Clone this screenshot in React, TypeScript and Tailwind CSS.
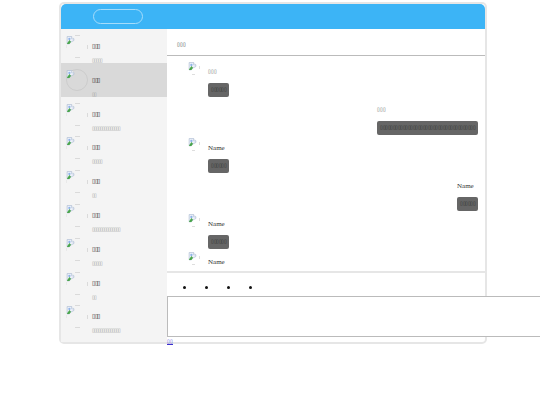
const rows = [
  { name: "▯▯▯", last: "▯▯▯▯▯" },
  { name: "▯▯▯", last: "▯▯", active: true },
  { name: "▯▯▯", last: "▯▯▯▯▯▯▯▯▯▯▯▯▯▯" },
  { name: "▯▯▯", last: "▯▯▯▯▯" },
  { name: "▯▯▯", last: "▯▯" },
  { name: "▯▯▯", last: "▯▯▯▯▯▯▯▯▯▯▯▯▯▯" },
  { name: "▯▯▯", last: "▯▯▯▯▯" },
  { name: "▯▯▯", last: "▯▯" },
  { name: "▯▯▯", last: "▯▯▯▯▯▯▯▯▯▯▯▯▯▯" },
];

const messages = [
  { name: "▯▯▯", text: "▯▯▯▯▯▯", tofu: true },
  { name: "▯▯▯", text: "▯▯▯▯▯▯▯▯▯▯▯▯▯▯▯▯▯▯▯▯▯▯▯▯▯▯▯▯▯▯▯▯▯▯▯▯▯▯", tofu: true, mine: true },
  { name: "Name", text: "▯▯▯▯▯▯" },
  { name: "Name", text: "▯▯▯▯▯▯", mine: true },
  { name: "Name", text: "▯▯▯▯▯▯" },
  // scrolled: only the header of this one is in view
  { name: "Name", text: "" },
];

// the browser's broken image glyph
function BrokenImage({ className }: { className: string }) {
  return (
    <svg viewBox="0 0 16 16" className={className}>
      <path d="M2 1h8l4 4v3L8 11l-2 3H2z" fill="#eef2fa" stroke="#9fb0cc" strokeWidth="1" />
      <path d="M2 13l4-6 3 3-3 4H2z" fill="#4aa54c" />
      <path d="M6 3a2 2 0 1 0 .1 0z" fill="#8fb2e8" />
      <path d="M10 1v4h4" fill="#fff" stroke="#9fb0cc" strokeWidth="1" />
    </svg>
  );
}

function ListAvatar({ active }: { active?: boolean }) {
  return (
    <div className="relative h-[22px] w-[22px] shrink-0">
      <svg viewBox="0 0 22 22" className="absolute inset-0 h-full w-full overflow-visible">
        {active ? (
          <circle cx="11" cy="11" r="10.500" fill="none" stroke="#c6c6c6" strokeWidth="0.7" />
        ) : (
          <g fill="none" stroke="#cfcfcf" strokeWidth="0.7">
            <path d="M9 0.500h5" />
            <path d="M9 22.500h5" />
            <path d="M21.500 10v4" />
            <path d="M0.500 10v3" stroke="#e4e4e4" />
          </g>
        )}
      </svg>
      <BrokenImage className="absolute left-0 top-px h-[9px] w-[9px]" />
    </div>
  );
}

function ChatAvatar() {
  return (
    <div className="relative mt-px h-[13px] w-[12px] shrink-0">
      <svg viewBox="0 0 12 13" className="absolute inset-0 h-full w-full">
        <g fill="none" stroke="#d0d0d0" strokeWidth="0.7">
          <path d="M11.500 4v3" />
          <path d="M4 12.500h3" />
        </g>
      </svg>
      <BrokenImage className="absolute left-0 top-0 h-[9px] w-[9px]" />
    </div>
  );
}

export default function App() {
  return (
    <div className="h-[405px] w-[540px] overflow-hidden bg-white font-['Liberation_Serif',serif]">
      <div className="ml-[59px] mt-[2px] inline-block h-[342px] w-[428px] rounded-[5px] border-2 border-[#e6e6e6] align-top">
        <div className="flex h-[25px] items-center rounded-t-[5px] bg-[#3cb4f6] pl-[32px]">
          <div className="h-[15px] w-[50px] rounded-full border border-[#a5dcfa]" />
        </div>
        <div className="flex h-[313px]">
          <div className="w-[106px] shrink-0 bg-[#f4f4f4]">
            {rows.map((r, i) => (
              <div
                key={i}
                className={`flex h-[33.8px] items-start pl-[5px] pt-[6px] ${r.active ? "bg-[#d9d9d9]" : ""}`}
              >
                <ListAvatar active={r.active} />
                <div className="ml-[4px] flex flex-col">
                  <span className="mt-[8px] text-[6px] leading-[6px] tracking-[-0.5px] text-[#111]">{r.name}</span>
                  <span className="mt-[9px] text-[5px] leading-[6px] tracking-[-1px] text-[#999]">{r.last}</span>
                </div>
              </div>
            ))}
          </div>
          <div className="w-[318px] shrink-0">
            <div className="flex h-[27px] items-center border-b border-[#bbb] pl-[10px] pt-[5px] text-[5px] text-[#222]">
              ▯▯▯
            </div>
            <div className="h-[215px] overflow-hidden pt-[5px]">
              {messages.map((m, i) => (
                <div
                  key={i}
                  className={`flex h-[38px] ${m.mine ? "justify-end pr-[7px]" : "pl-[21px]"}`}
                >
                  {!m.mine && <ChatAvatar />}
                  <div className={`flex flex-col items-start ${m.mine ? "" : "ml-[8px]"}`}>
                    <span
                      className={`mt-[7px] h-[8px] leading-[8px] ${
                        m.tofu ? "text-[5px] text-[#555]" : "text-[7px] text-[#333]"
                      }`}
                    >
                      {m.name}
                    </span>
                    {m.text && (
                      <span className="mt-[7px] flex h-[13.500px] items-center rounded-[2px] bg-[#666] px-[3px] text-[5px] tracking-[-0.5px] text-[#2a2a2a]">
                        {m.text}
                      </span>
                    )}
                  </div>
                </div>
              ))}
            </div>
            <div className="h-[25px] border-t-2 border-[#e6e6e6]">
              <ul className="flex pl-[16px] pt-[13px]">
                {[0, 1, 2, 3].map((n) => (
                  <li key={n} className="mr-[19.500px] h-[2.500px] w-[2.500px] rounded-full bg-[#111]" />
                ))}
              </ul>
            </div>
            <div className="h-[41px] w-[400px] border border-[#bbb] bg-white" />
            <a href="#" className="mt-[1px] block text-[5px] leading-[7px] text-[#3b2fd0] underline">
              ▯▯
            </a>
          </div>
        </div>
      </div>
    </div>
  );
}
